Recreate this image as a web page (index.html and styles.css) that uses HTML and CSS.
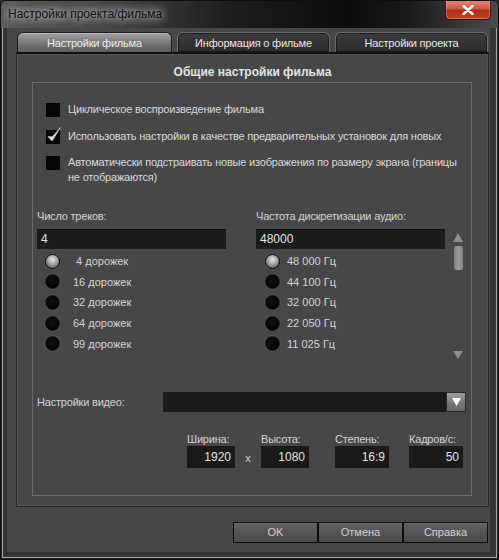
FILE: index.html
```html
<!DOCTYPE html>
<html>
<head>
<meta charset="utf-8">
<link rel="stylesheet" href="styles.css">
</head>
<body>
<div class="window">
  <div class="titlebar">
    <span class="title">Настройки проекта/фильма</span>
    <div class="close">
      <svg width="12" height="10" viewBox="0 0 12 10"><path d="M1.5 1 L10.5 9 M10.5 1 L1.5 9" stroke="#fff" stroke-width="2.4" stroke-linecap="round"/></svg>
    </div>
  </div>
  <div class="client">
    <div class="tabs">
      <div class="tab tab-first active">Настройки фильма</div>
      <div class="tab">Информация о фильме</div>
      <div class="tab">Настройки проекта</div>
    </div>
    <div class="panel">
      <div class="panel-title">Общие настройки фильма</div>
      <div class="group">
        <div class="checks">
          <div class="check-row">
            <span class="cb"></span>
            <span class="cb-label">Циклическое воспроизведение фильма</span>
          </div>
          <div class="check-row">
            <span class="cb"><svg class="tick" width="16" height="18" viewBox="0 0 16 18"><path d="M2 10.5 L6 15 L14.5 1.5 L6.2 11 Z" fill="#e6e6e6" stroke="#bdbdbd" stroke-width="0.8" stroke-linejoin="round"/></svg></span>
            <span class="cb-label">Использовать настройки в качестве предварительных установок для новых</span>
          </div>
          <div class="check-row">
            <span class="cb"></span>
            <span class="cb-label">Автоматически подстраивать новые изображения по размеру экрана (границы<br>не отображаются)</span>
          </div>
        </div>

        <div class="columns">
          <div class="col col-left">
            <div class="label">Число треков:</div>
            <div class="input">4</div>
            <div class="radios">
              <div class="radio-row"><span class="radio on"></span><span class="rlabel">&nbsp;4 дорожек</span></div>
              <div class="radio-row"><span class="radio"></span><span class="rlabel">16 дорожек</span></div>
              <div class="radio-row"><span class="radio"></span><span class="rlabel">32 дорожек</span></div>
              <div class="radio-row"><span class="radio"></span><span class="rlabel">64 дорожек</span></div>
              <div class="radio-row"><span class="radio"></span><span class="rlabel">99 дорожек</span></div>
            </div>
          </div>
          <div class="col col-right">
            <div class="label">Частота дискретизации аудио:</div>
            <div class="input">48000</div>
            <div class="radios">
              <div class="radio-row"><span class="radio on"></span><span class="rlabel">48 000 Гц</span></div>
              <div class="radio-row"><span class="radio"></span><span class="rlabel">44 100 Гц</span></div>
              <div class="radio-row"><span class="radio"></span><span class="rlabel">32 000 Гц</span></div>
              <div class="radio-row"><span class="radio"></span><span class="rlabel">22 050 Гц</span></div>
              <div class="radio-row"><span class="radio"></span><span class="rlabel">11 025 Гц</span></div>
            </div>
          </div>
          <div class="scroll">
            <svg class="arrow-up" width="10" height="9" viewBox="0 0 10 9"><path d="M5 0 L10 9 L0 9 Z" fill="#8e8e90"/></svg>
            <div class="thumb"></div>
            <svg class="arrow-down" width="10" height="8" viewBox="0 0 10 8"><path d="M0 0 L10 0 L5 8 Z" fill="#8e8e90"/></svg>
          </div>
        </div>

        <div class="video-row">
          <div class="video-label">Настройки видео:</div>
          <div class="select">
            <div class="select-btn"><svg width="9" height="8" viewBox="0 0 9 8"><path d="M0 0 L9 0 L4.5 8 Z" fill="#fff"/></svg></div>
          </div>
        </div>

        <div class="fields">
          <div class="field w48"><div class="flabel">Ширина:</div><div class="fbox">1920</div></div>
          <div class="times">x</div>
          <div class="field w48"><div class="flabel">Высота:</div><div class="fbox">1080</div></div>
          <div class="field w54 gap26"><div class="flabel">Степень:</div><div class="fbox">16:9</div></div>
          <div class="field w54 gap20"><div class="flabel">Кадров/с:</div><div class="fbox">50</div></div>
        </div>
      </div>
    </div>
    <div class="buttons">
      <div class="btn">OK</div>
      <div class="btn">Отмена</div>
      <div class="btn">Справка</div>
    </div>
  </div>
</div>
</body>
</html>
```

FILE: styles.css
```css
html, body {
  margin: 0;
  padding: 0;
  background: #2b2b2d;
}

body {
  width: 499px;
  height: 560px;
  overflow: hidden;
  font-family: "Liberation Sans", Arial, sans-serif;
}

.window {
  width: 499px;
  height: 560px;
  box-sizing: border-box;
  border: 1px solid #0e0e0e;
  border-radius: 6px 6px 0 0;
  background: #343437;
  box-shadow: inset 0 0 0 1px #2a2a2c, inset 0 0 0 2px #9aa4ae, inset 0 0 0 3px #3a3a3d;
  display: flex;
  flex-direction: column;
  overflow: hidden;
}

.titlebar {
  height: 27px;
  flex: none;
  display: flex;
  align-items: flex-start;
  background: linear-gradient(to right, #5c5c5e 0%, #4a4a4c 20%, #1e1e20 45%, #0c0c0d 70%, #1a1a1b 82%, #4c4c4e 100%);
  border-radius: 5px 5px 0 0;
}

.title {
  padding-left: 7px;
  line-height: 27px;
  font-size: 12px;
  color: #0e0e0e;
  text-shadow: 0 0 6px rgba(215, 215, 215, 0.95), 0 0 10px rgba(195, 195, 195, 0.85), 0 0 16px rgba(170, 170, 170, 0.7);
  font-family: "Liberation Sans", Arial, sans-serif;
}

.close {
  margin-left: auto;
  margin-right: 7px;
  margin-top: -1px;
  width: 46px;
  height: 20px;
  box-sizing: border-box;
  border: 1px solid #3a1410;
  border-top: none;
  border-radius: 0 0 5px 5px;
  background: linear-gradient(to bottom, #e38a78 0%, #cf5a44 45%, #b22d18 55%, #c0442a 100%);
  display: flex;
  align-items: center;
  justify-content: center;
  box-shadow: inset 0 0 0 1px rgba(255, 200, 190, 0.35);
}

.client {
  flex: 1;
  margin: 0 8px 7px 6px;
  background: #47474a;
  padding: 4px 0 0 9px;
  display: flex;
  flex-direction: column;
  font-size: 11px;
  letter-spacing: -0.2px;
  color: #d6d6d6;
}

.tabs {
  display: flex;
  gap: 5px;
  height: 20px;
  margin-left: 1px;
}

.tab {
  width: 153px;
  box-sizing: border-box;
  border: 1px solid #6c6c6e;
  border-bottom: none;
  border-radius: 6px 6px 0 0;
  background: linear-gradient(to bottom, #3c3c3f, #2c2c2e);
  color: #e6e6e6;
  text-align: center;
  line-height: 20px;
  font-size: 11px;
  box-shadow: inset 0 0 0 1px #1c1c1e;
}

.tab-first {
  width: 155px;
}

.tab.active {
  background: linear-gradient(to bottom, #a2a2a4 0%, #86868a 35%, #6a6a6d 70%, #5e5e61 100%);
  border-color: #1e1e20;
  box-shadow: inset 0 1px 0 #b8b8ba;
  color: #ececec;
}

.panel {
  width: 473px;
  height: 455px;
  box-sizing: border-box;
  border: 1px solid #2a2a2c;
  border-top: 2px solid #121214;
  background: #47474a;
  box-shadow: inset 0 0 0 1px #515154;
}

.panel-title {
  height: 28px;
  box-sizing: border-box;
  padding-top: 11px;
  line-height: 14px;
  text-align: center;
  font-weight: bold;
  font-size: 12px;
  letter-spacing: 0;
  color: #e4e4e4;
}

.group {
  margin: 0 16px 0 15px;
  height: 414px;
  box-sizing: border-box;
  border: 1px solid #6a6a6d;
}

.checks {
  padding: 20px 0 0 13px;
}

.check-row {
  display: flex;
  align-items: flex-start;
  margin-bottom: 12px;
}

.check-row:first-child {
  margin-bottom: 13px;
}

.check-row:last-child {
  margin-bottom: 0;
}

.cb {
  width: 14px;
  height: 14px;
  flex: none;
  background: #060606;
  position: relative;
}

.tick {
  position: absolute;
  left: 0;
  top: -4px;
}

.cb-label {
  margin-left: 8px;
  line-height: 15px;
  margin-top: -1px;
  color: #d8d8d8;
}

.columns {
  display: flex;
  margin-top: 24px;
  padding-left: 4px;
}

.col {
  width: 189px;
}

.col-right {
  margin-left: 30px;
}

.label {
  line-height: 14px;
  height: 14px;
  margin-bottom: 6px;
  color: #d2d2d2;
}

.input {
  height: 20px;
  box-sizing: border-box;
  background: #1b1b1c;
  border-top: 1px solid #111;
  padding-left: 4px;
  line-height: 19px;
  font-size: 12px;
  letter-spacing: 0;
  color: #e2e2e2;
}

.radios {
  margin-top: 2px;
}

.radio-row {
  height: 20.6px;
  display: flex;
  align-items: center;
}

.col-left .radio-row {
  padding-left: 8px;
}

.col-right .radio-row {
  padding-left: 9px;
}

.radio {
  width: 15px;
  height: 15px;
  box-sizing: border-box;
  border-radius: 50%;
  background: radial-gradient(circle at 45% 40%, #111 0%, #040404 70%);
  border: 1px solid #1a1a1a;
  box-shadow: 0 0 0 1px rgba(90, 90, 92, 0.5);
  flex: none;
}

.radio.on {
  background: radial-gradient(circle at 50% 35%, #e6e6e6 0%, #b4b4b4 35%, #6e6e6e 75%, #3c3c3c 100%);
  border: 1px solid #0a0a0a;
}

.col-left .rlabel {
  margin-left: 13px;
}

.col-right .rlabel {
  margin-left: 7px;
}

.rlabel {
  color: #d4d4d4;
  font-size: 11px;
  letter-spacing: 0;
}

.scroll {
  margin-left: 8px;
  width: 10px;
  display: flex;
  flex-direction: column;
  padding-top: 24px;
}

.arrow-up {
  display: block;
}

.thumb {
  margin-top: 4px;
  height: 24px;
  width: 9px;
  margin-left: 1px;
  border-radius: 2px;
  background: linear-gradient(to right, #7e7e80, #9a9a9c, #7e7e80);
}

.arrow-down {
  display: block;
  margin-top: 81px;
}

.video-row {
  display: flex;
  align-items: center;
  margin-top: 33px;
  padding-left: 4px;
  height: 20px;
}

.video-label {
  width: 126px;
  color: #d2d2d2;
}

.select {
  width: 303px;
  height: 20px;
  background: #1b1b1c;
  display: flex;
  justify-content: flex-end;
}

.select-btn {
  width: 20px;
  height: 20px;
  box-sizing: border-box;
  border: 1px solid #2a2a2c;
  background: linear-gradient(to bottom, #a0a0a2, #78787a 55%, #68686a);
  display: flex;
  align-items: center;
  justify-content: center;
}

.fields {
  display: flex;
  align-items: flex-end;
  margin-top: 20px;
  padding-left: 154px;
}

.field {
  display: flex;
  flex-direction: column;
}

.w48 {
  width: 48px;
}

.w54 {
  width: 54px;
}

.gap26 {
  margin-left: 26px;
}

.gap20 {
  margin-left: 20px;
}

.flabel {
  line-height: 14px;
  color: #d2d2d2;
}

.fbox {
  height: 22px;
  box-sizing: border-box;
  background: #1a1a1b;
  text-align: right;
  padding-right: 4px;
  line-height: 23px;
  font-size: 12px;
  letter-spacing: 0;
  color: #e2e2e2;
}

.times {
  width: 26px;
  text-align: center;
  line-height: 14px;
  margin-bottom: 3px;
  color: #cfcfcf;
}

.buttons {
  display: flex;
  justify-content: flex-end;
  margin-top: 15px;
  padding-right: 2px;
}

.btn {
  width: 85px;
  height: 21px;
  box-sizing: border-box;
  border: 1px solid #0c0c0c;
  background: linear-gradient(to bottom, #626265 0%, #555558 50%, #4b4b4e 100%);
  box-shadow: inset 0 1px 0 #6e6e71;
  text-align: center;
  line-height: 19px;
  color: #d0d0d0;
  font-size: 11px;
  letter-spacing: 0;
}
```
